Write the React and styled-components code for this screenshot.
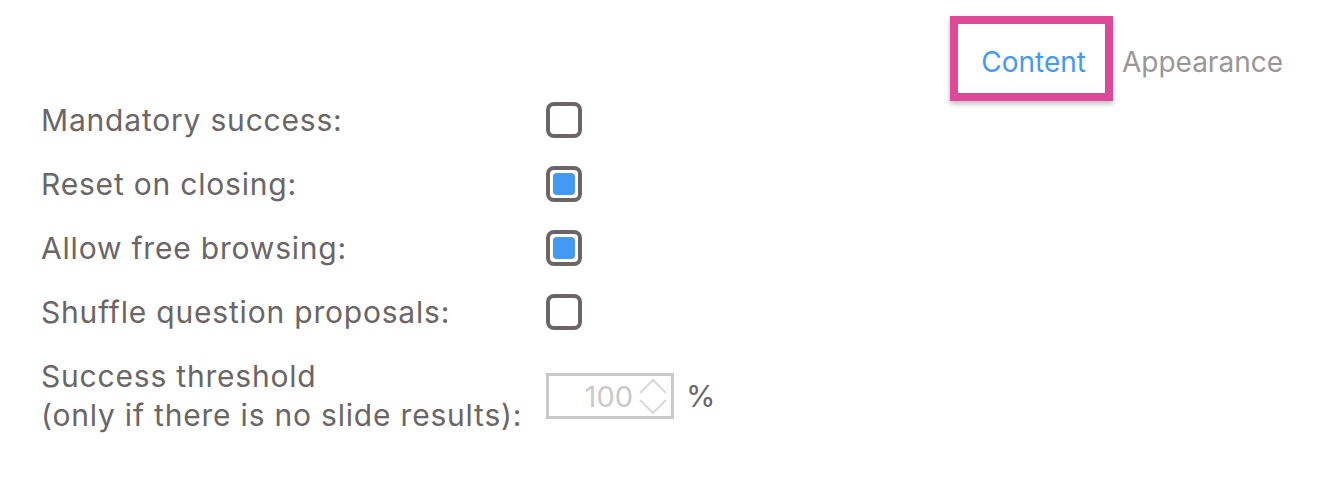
import React from 'react'
import styled, { createGlobalStyle } from 'styled-components'

const GlobalStyle = createGlobalStyle`
  body {
    margin: 0;
    background: #ffffff;
    font-family: Inter, 'Noto Sans', sans-serif;
  }
`

const Page = styled.div`
  width: 1322px;
  height: 478px;
  box-sizing: border-box;
  padding: 40px 25px 0 41px;
`

const Tabs = styled.div`
  display: flex;
  justify-content: flex-end;
  gap: 8px;
  height: 48px;
`

const Tab = styled.div`
  position: relative;
  display: flex;
  align-items: center;
  height: 44px;
  padding: 0 14px;
  font-size: 28px;
  color: ${(p) => (p.active ? '#4499f5' : '#9b9696')};
`

// tutorial highlight drawn over the active tab
const Highlight = styled.span`
  position: absolute;
  top: -24px;
  bottom: -17px;
  left: -17px;
  right: -13px;
  border: 8px solid #de4899;
  box-shadow: 0 3px 5px rgba(0, 0, 0, 0.25);
  pointer-events: none;
`

const Form = styled.div`
  display: grid;
  grid-template-columns: 505px auto;
  grid-auto-rows: minmax(64px, auto);
  align-items: center;
`

const Label = styled.div`
  font-size: 30px;
  letter-spacing: 0.8px;
  line-height: 39px;
  color: #6b6565;
`

const Box = styled.div`
  width: 36px;
  height: 36px;
  box-sizing: border-box;
  border: 4px solid #6b6565;
  border-radius: 8px;
  padding: 3px;

  &::after {
    content: '';
    display: ${(p) => (p.checked ? 'block' : 'none')};
    width: 100%;
    height: 100%;
    border-radius: 4px;
    background: #4499f5;
  }
`

const ThresholdRow = styled.div`
  grid-column: 1 / -1;
  display: grid;
  grid-template-columns: 505px auto;
  align-items: center;
  padding-top: 13px;
`

const Field = styled.div`
  display: flex;
  align-items: center;
  gap: 12px;
`

const NumberBox = styled.div`
  display: flex;
  align-items: center;
  justify-content: flex-end;
  width: 128px;
  height: 46px;
  box-sizing: border-box;
  border: 3px solid #c9c9c9;
  padding-right: 3px;
  font-size: 29px;
  color: #c9c9c9;
`

const Spinner = styled.svg`
  margin-left: 5px;
`

const Unit = styled.span`
  font-size: 30px;
  color: #6b6565;
`

const options = [
  { label: 'Mandatory success:', checked: false },
  { label: 'Reset on closing:', checked: true },
  { label: 'Allow free browsing:', checked: true },
  { label: 'Shuffle question proposals:', checked: false },
]

export default function App() {
  return (
    <>
      <GlobalStyle />
      <Page>
        <Tabs>
          <Tab active>
            Content
            <Highlight />
          </Tab>
          <Tab>Appearance</Tab>
        </Tabs>
        <Form>
          {options.map((o) => (
            <React.Fragment key={o.label}>
              <Label>{o.label}</Label>
              <Box checked={o.checked} />
            </React.Fragment>
          ))}
          <ThresholdRow>
            <Label>
              Success threshold
              <br />
              (only if there is no slide results):
            </Label>
            <Field>
              <NumberBox>
                100
                <Spinner width="30" height="40" viewBox="0 0 30 40">
                  <path d="M2 17 L15 4 L28 17" fill="none" stroke="#d9d9d9" strokeWidth="2" />
                  <path d="M2 24 L15 37 L28 24" fill="none" stroke="#d9d9d9" strokeWidth="2" />
                </Spinner>
              </NumberBox>
              <Unit>%</Unit>
            </Field>
          </ThresholdRow>
        </Form>
      </Page>
    </>
  )
}
